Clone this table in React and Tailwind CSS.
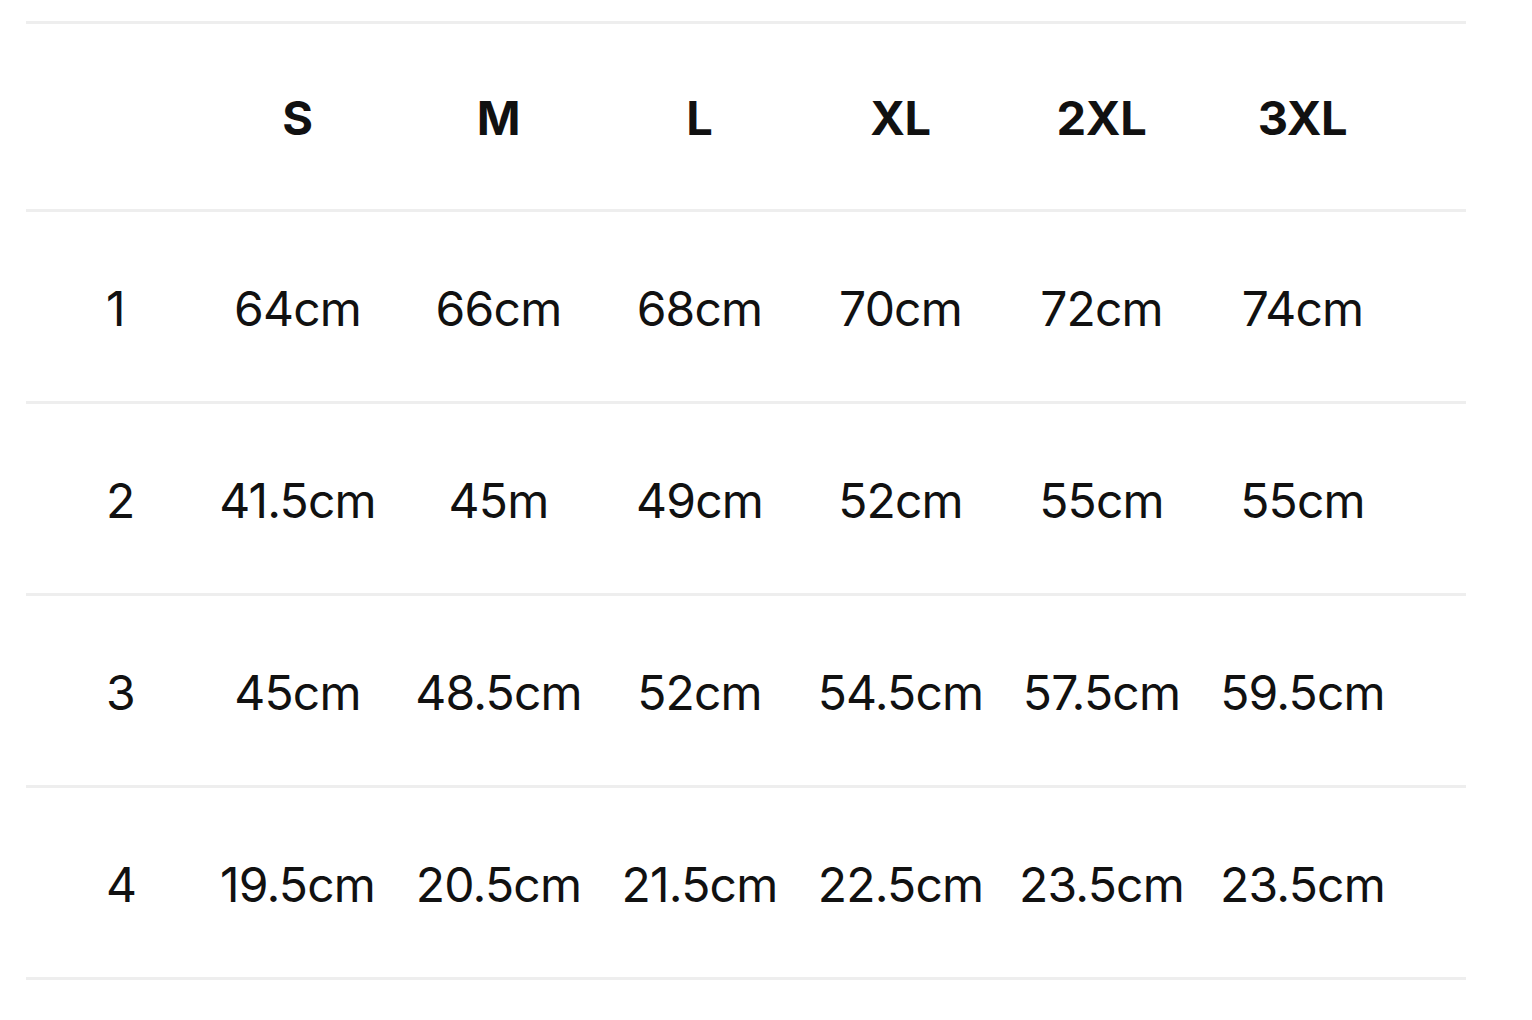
export default function App() {
  const sizes = ["S", "M", "L", "XL", "2XL", "3XL"];
  const rows = [
    ["1", ["64cm", "66cm", "68cm", "70cm", "72cm", "74cm"]],
    ["2", ["41.5cm", "45m", "49cm", "52cm", "55cm", "55cm"]],
    ["3", ["45cm", "48.5cm", "52cm", "54.5cm", "57.5cm", "59.5cm"]],
    ["4", ["19.5cm", "20.5cm", "21.5cm", "22.5cm", "23.5cm", "23.5cm"]],
  ];
  return (
    <div
      className="w-[1532px] h-[1020px] bg-white text-[#111] pt-[21px] pl-[26px]"
      style={{ fontFamily: "Inter, 'Liberation Sans', sans-serif" }}
    >
      <div className="w-[1440px] border-t-[3px] border-[#eeeeee]">
        <div className="grid grid-cols-[171px_repeat(6,201px)] h-[188px] border-b-[3px] border-[#eeeeee] items-center pt-[2px]">
          <div />
          {sizes.map((s) => (
            <div key={s} className="text-center text-[47px] leading-none font-bold tracking-[-0.3px]">
              {s}
            </div>
          ))}
        </div>
        {rows.map(([label, vals]) => (
          <div
            key={label}
            className="grid grid-cols-[171px_repeat(6,201px)] h-[192px] border-b-[3px] border-[#eeeeee] items-center pt-[4px]"
          >
            <div className="pl-[80px] text-[48px] leading-none">{label}</div>
            {vals.map((v, i) => (
              <div key={i} className="text-center text-[48px] leading-none tracking-[-0.8px]">
                {v}
              </div>
            ))}
          </div>
        ))}
      </div>
    </div>
  );
}
